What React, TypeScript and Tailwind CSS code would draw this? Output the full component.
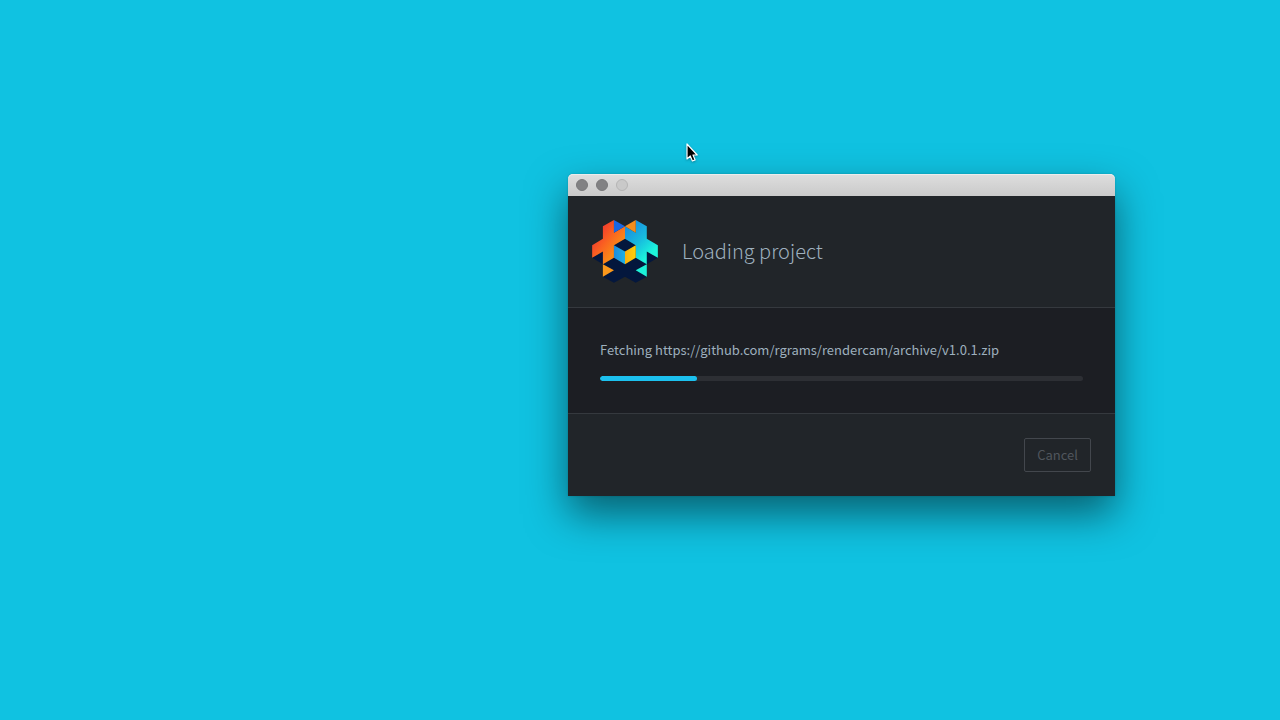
import React from 'react';

const PROGRESS = 20;

const Logo: React.FC = () => (
  <svg viewBox="22 24 196 188" className="h-[63px] w-[66px] shrink-0" aria-hidden="true">
    <defs>
      <linearGradient id="warm" gradientUnits="userSpaceOnUse" x1="40" y1="60" x2="100" y2="105">
        <stop offset="0" stopColor="#f23d2c" />
        <stop offset="0.5" stopColor="#fa6420" />
        <stop offset="1" stopColor="#f98a18" />
      </linearGradient>
      <linearGradient id="cool" gradientUnits="userSpaceOnUse" x1="128" y1="50" x2="200" y2="122">
        <stop offset="0" stopColor="#1a92e0" />
        <stop offset="0.5" stopColor="#18bbde" />
        <stop offset="1" stopColor="#1cf6dc" />
      </linearGradient>
      <linearGradient id="gold" gradientUnits="userSpaceOnUse" x1="120" y1="0" x2="152" y2="0">
        <stop offset="0" stopColor="#fdaf0c" />
        <stop offset="1" stopColor="#fdd10c" />
      </linearGradient>
      <linearGradient id="blue" gradientUnits="userSpaceOnUse" x1="87" y1="0" x2="120" y2="0">
        <stop offset="0" stopColor="#1c8cde" />
        <stop offset="1" stopColor="#1fb0e4" />
      </linearGradient>
    </defs>
    <path
      fill="#04173d"
      d="M22 137 54 118 87 137 120 156 152 137 185 118 218 137 185 156 152 174 185 193 152 211 120 193 87 211 54 193 87 174 54 156Z"
    />
    <path fill="#04173d" d="M120 80 152 99 120 118 87 99Z" />
    <path
      fill="url(#warm)"
      d="M87 24 54 43V80L22 99V137L54 118V156L87 137V99L120 80V43L87 62Z"
    />
    <path
      fill="url(#cool)"
      d="M152 24 185 43V80L218 99V137L185 118V156L152 137V99L120 80V43L152 62Z"
    />
    <path fill="#1a66e4" d="M87 24 120 43 87 62Z" />
    <path fill="#f48d1c" d="M152 24 120 43 152 62Z" />
    <path fill="url(#blue)" d="M87 99 120 118V156L87 137Z" />
    <path fill="url(#gold)" d="M152 99 120 118V156L152 137Z" />
    <path fill="#fb981c" d="M54 156 87 174 54 193Z" />
    <path fill="#1cf3da" d="M185 156 152 174 185 193Z" />
  </svg>
);

const TitleBar: React.FC = () => (
  <div className="flex h-[22px] items-center gap-2 rounded-t-[5px] bg-linear-to-b from-[#dedede] to-[#cacaca] px-2 shadow-[inset_0_1px_0_#ececec]">
    <button type="button" aria-label="Close" className="size-3 rounded-full border border-[#79797b] bg-[#828284]" />
    <button type="button" aria-label="Minimize" className="size-3 rounded-full border border-[#79797b] bg-[#828284]" />
    <button type="button" aria-label="Zoom" disabled className="size-3 rounded-full border border-[#b5b5b5] bg-[#c9c9c9]" />
  </div>
);

const Cursor: React.FC = () => (
  <svg viewBox="0 0 12 20" className="absolute top-[143px] left-[686px] h-5 w-3 drop-shadow-[0_1px_1px_rgba(0,0,0,0.3)]" aria-hidden="true">
    <path
      d="M1 1V16L4.3 13 6.4 18 9.1 16.9 7 12H11.2Z"
      fill="#000"
      stroke="#fff"
      strokeWidth="1.2"
      strokeLinejoin="round"
    />
  </svg>
);

const App: React.FC = () => {
  return (
    <main className="relative min-h-screen overflow-hidden bg-[#10c2e1] font-['Noto_Sans_CJK_SC',sans-serif]">
      <section className="absolute top-[174px] left-[568px] w-[547px] rounded-t-[5px] shadow-[0_18px_40px_rgba(0,0,0,0.5),0_0_2px_rgba(0,0,0,0.2)]">
        <TitleBar />
        <header className="flex h-28 items-center gap-6 border-b border-[#35393e] bg-[#212529] px-6">
          <Logo />
          <h1 className="pb-0.5 text-xl font-light text-[#9eb0be]">Loading project</h1>
        </header>
        <div className="bg-[#1c1e23] px-8 pt-8 pb-8">
          <label htmlFor="fetch-progress" className="block text-[13px] leading-5 text-[#9eb0be]">
            Fetching https://github.com/rgrams/rendercam/archive/v1.0.1.zip
          </label>
          <progress id="fetch-progress" className="sr-only" value={PROGRESS} max={100} />
          <div className="mt-4 h-[5px] overflow-hidden rounded-full bg-[#2d2f34]">
            <div className="h-full rounded-full bg-[#1cc0ee]" style={{ width: `${PROGRESS}%` }} />
          </div>
        </div>
        <footer className="flex justify-end border-t border-[#35393e] bg-[#212529] p-6">
          <button
            type="button"
            disabled
            className="h-[34px] rounded-xs border border-[#43474d] px-3 text-[13px] leading-5 text-[#50565d]"
          >
            Cancel
          </button>
        </footer>
      </section>
      <Cursor />
    </main>
  );
};

export default App;
